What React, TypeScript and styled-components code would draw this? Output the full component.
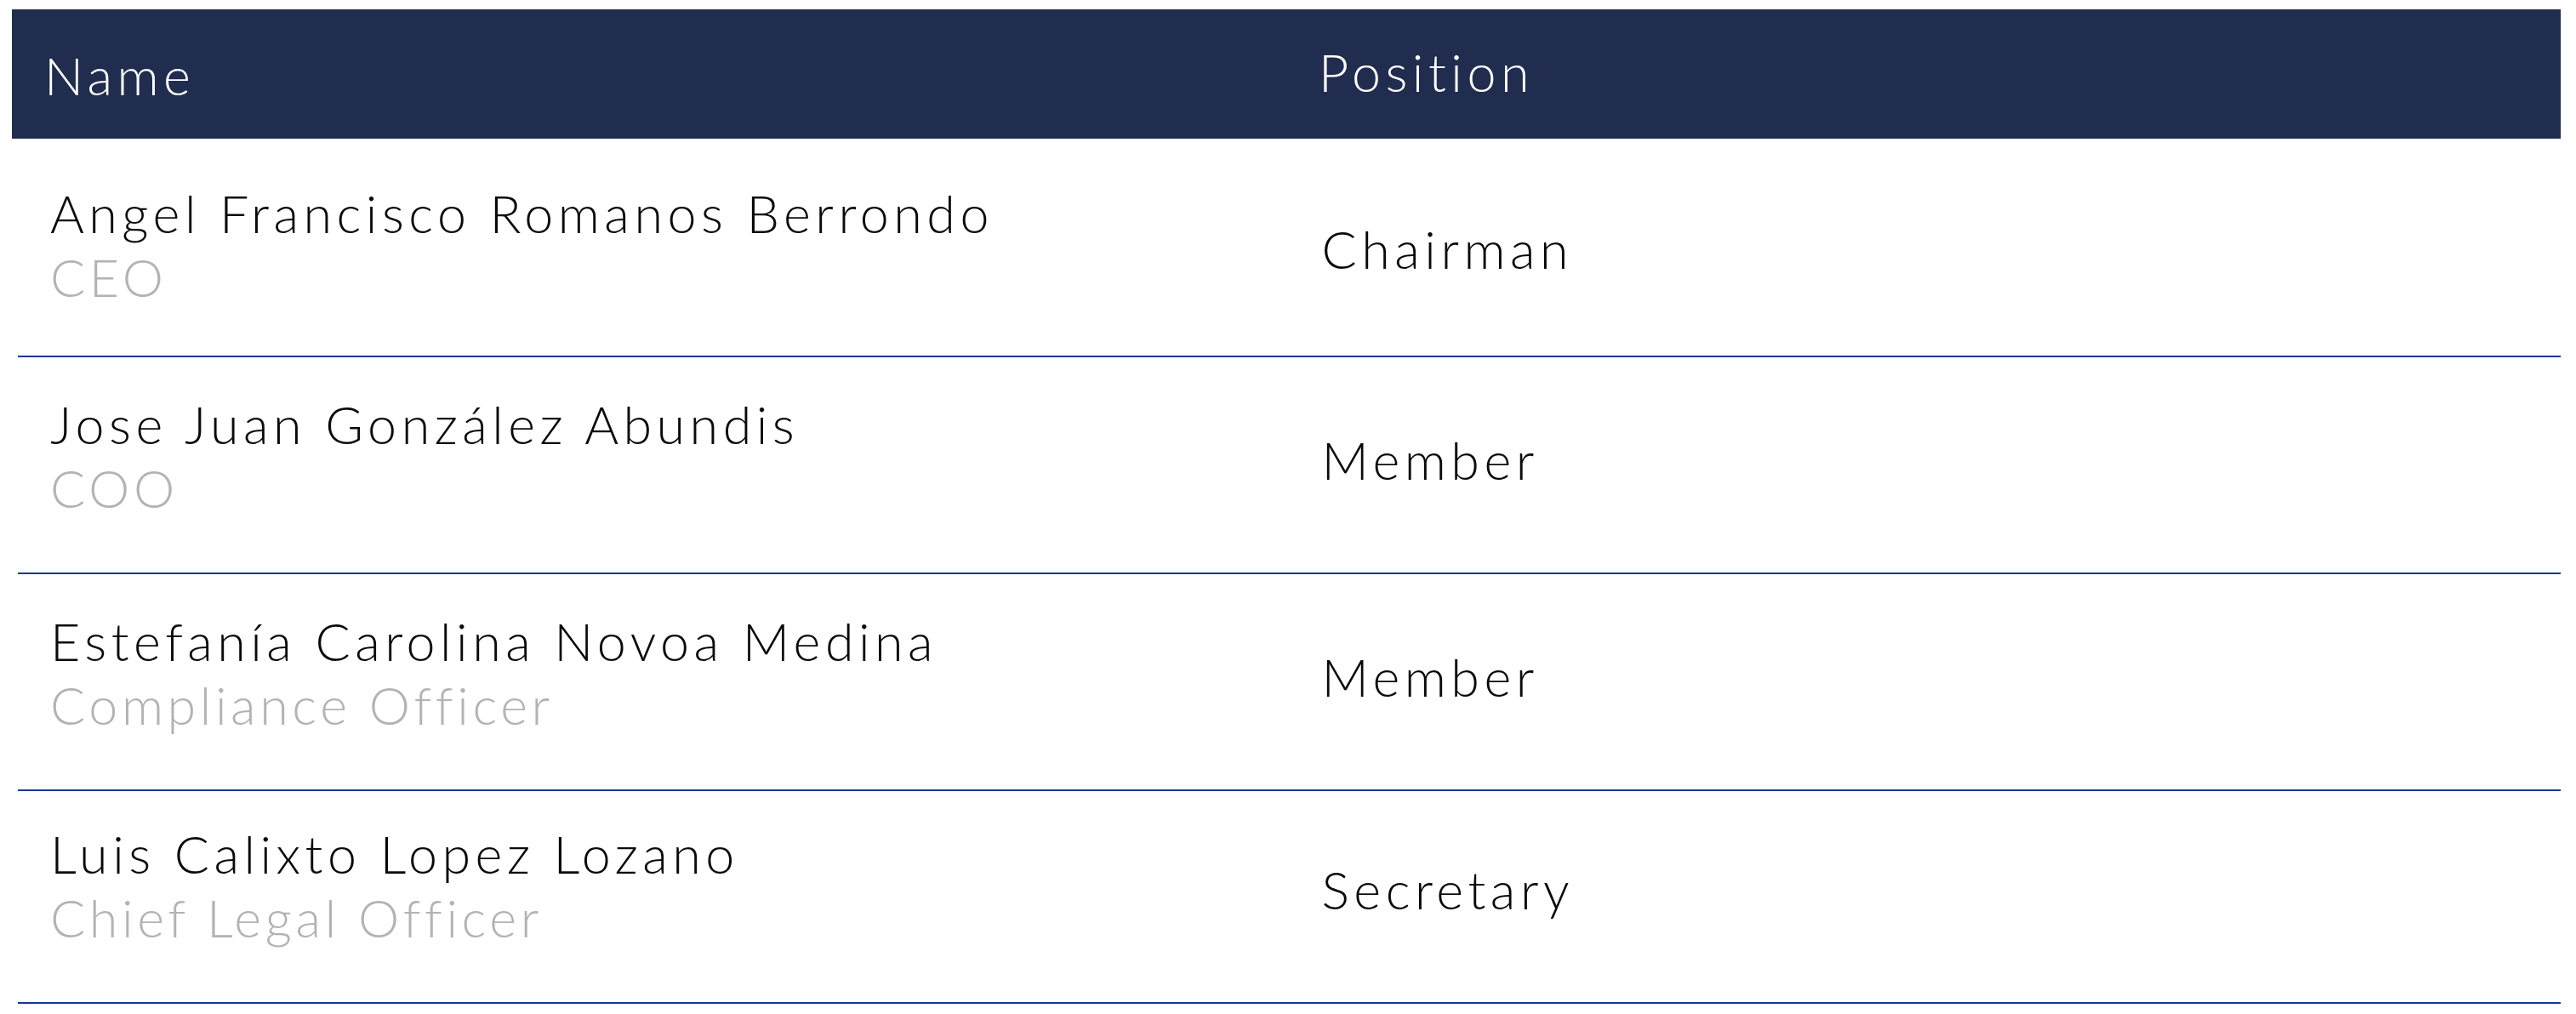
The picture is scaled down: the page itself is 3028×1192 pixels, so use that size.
import React from 'react';
import styled, { createGlobalStyle } from 'styled-components';

interface Member {
  name: string;
  role: string;
  position: string;
}

const members: Member[] = [
  { name: 'Angel Francisco Romanos Berrondo', role: 'CEO', position: 'Chairman' },
  { name: 'Jose Juan González Abundis', role: 'COO', position: 'Member' },
  { name: 'Estefanía Carolina Novoa Medina', role: 'Compliance Officer', position: 'Member' },
  { name: 'Luis Calixto Lopez Lozano', role: 'Chief Legal Officer', position: 'Secretary' },
];

const GlobalStyle = createGlobalStyle`
  body {
    margin: 0;
    background: #ffffff;
    font-family: Lato, "Open Sans", sans-serif;
  }
`;

const Page = styled.div`
  padding: 11px 18px 0 14px;
`;

// Navy header band
const Header = styled.div`
  display: grid;
  grid-template-columns: 1fr 1fr;
  background: #212d4f;
`;

const HeadCell = styled.div<{ $lift?: number }>`
  padding: ${(p) => 40 - (p.$lift || 0)}px 38px ${(p) => 37 + (p.$lift || 0)}px;
  font-size: 61px;
  line-height: 75px;
  font-weight: 300;
  letter-spacing: 5.5px;
  color: #ffffff;
`;

const Rows = styled.div`
  margin-left: 7px;
`;

const Row = styled.div`
  display: grid;
  grid-template-columns: 1fr 1fr;
  align-items: center;
  padding: 41px 0 62px;
  border-bottom: 2px solid #13369a;

  &:first-child {
    padding: 50px 0 55px;
  }

  &:last-child {
    padding: 36px 0 62px;
  }
`;

const Cell = styled.div<{ $drop?: number }>`
  padding: ${(p) => p.$drop || 0}px 38px 0;
  display: flex;
  flex-direction: column;
`;

const Line = styled.span<{ $muted?: boolean }>`
  font-size: 61px;
  line-height: 75px;
  font-weight: 300;
  letter-spacing: ${(p) => (p.$muted ? '4.6px' : '5.5px')};
  color: ${(p) => (p.$muted ? '#b3b3b3' : '#0a0a0a')};
  white-space: nowrap;
`;

const App: React.FC = () => {
  return (
    <Page>
      <GlobalStyle />
      <Header>
        <HeadCell>Name</HeadCell>
        <HeadCell $lift={4}>Position</HeadCell>
      </Header>
      <Rows>
        {members.map((m) => (
          <Row key={m.name}>
            <Cell>
              <Line>{m.name}</Line>
              <Line $muted>{m.role}</Line>
            </Cell>
            <Cell $drop={8}>
              <Line>{m.position}</Line>
            </Cell>
          </Row>
        ))}
      </Rows>
    </Page>
  );
};

export default App;
